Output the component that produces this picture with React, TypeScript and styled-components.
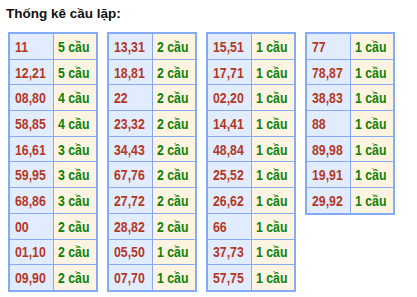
import React from 'react';
import styled, { createGlobalStyle } from 'styled-components';

const GlobalStyle = createGlobalStyle`
  body {
    margin: 0;
    background: #ffffff;
    font-family: Arial, "Liberation Sans", sans-serif;
  }
`;

const Page = styled.div`
  padding: 5px 0 0 8px;
`;

const Title = styled.div`
  margin-left: -2px;
  font-size: 13.5px;
  font-weight: bold;
  color: #111111;
  line-height: 18px;
  height: 27px;
`;

const Tables = styled.div`
  display: flex;
  align-items: flex-start;
  gap: 9px;
`;

const StatTable = styled.div`
  display: grid;
  grid-template-columns: 43px 42px;
  grid-auto-rows: 24.7px;
  gap: 1px;
  width: 90px;
  box-sizing: border-box;
  border: 2px solid #86abf5;
  background: #86abf5;
`;

const Cell = styled.div<{ $kind: 'pair' | 'count' }>`
  display: flex;
  align-items: center;
  padding-left: ${(p) => (p.$kind === 'pair' ? '5px' : '4px')};
  white-space: nowrap;
  overflow: hidden;
  color: ${(p) => (p.$kind === 'pair' ? '#b5371f' : '#0b820b')};
  background: ${(p) => (p.$kind === 'pair' ? '#e1edff' : '#fff4e1')};
`;

// narrow bold face, like Arial Narrow
const Label = styled.span`
  display: inline-block;
  font-family: "Liberation Sans", Arial, sans-serif;
  font-size: 15px;
  font-weight: bold;
  transform: scaleX(0.82);
  transform-origin: left center;
`;

const columns: [string, number][][] = [
  [['11', 5], ['12,21', 5], ['08,80', 4], ['58,85', 4], ['16,61', 3], ['59,95', 3], ['68,86', 3], ['00', 2], ['01,10', 2], ['09,90', 2]],
  [['13,31', 2], ['18,81', 2], ['22', 2], ['23,32', 2], ['34,43', 2], ['67,76', 2], ['27,72', 2], ['28,82', 2], ['05,50', 1], ['07,70', 1]],
  [['15,51', 1], ['17,71', 1], ['02,20', 1], ['14,41', 1], ['48,84', 1], ['25,52', 1], ['26,62', 1], ['66', 1], ['37,73', 1], ['57,75', 1]],
  [['77', 1], ['78,87', 1], ['38,83', 1], ['88', 1], ['89,98', 1], ['19,91', 1], ['29,92', 1]],
];

export default function App() {
  return (
    <>
      <GlobalStyle />
      <Page>
        <Title>Thống kê cầu lặp:</Title>
        <Tables>
          {columns.map((rows, i) => (
            <StatTable key={i}>
              {rows.map(([pair, count]) => (
                <React.Fragment key={pair}>
                  <Cell $kind="pair"><Label>{pair}</Label></Cell>
                  <Cell $kind="count"><Label>{count} cầu</Label></Cell>
                </React.Fragment>
              ))}
            </StatTable>
          ))}
        </Tables>
      </Page>
    </>
  );
}
